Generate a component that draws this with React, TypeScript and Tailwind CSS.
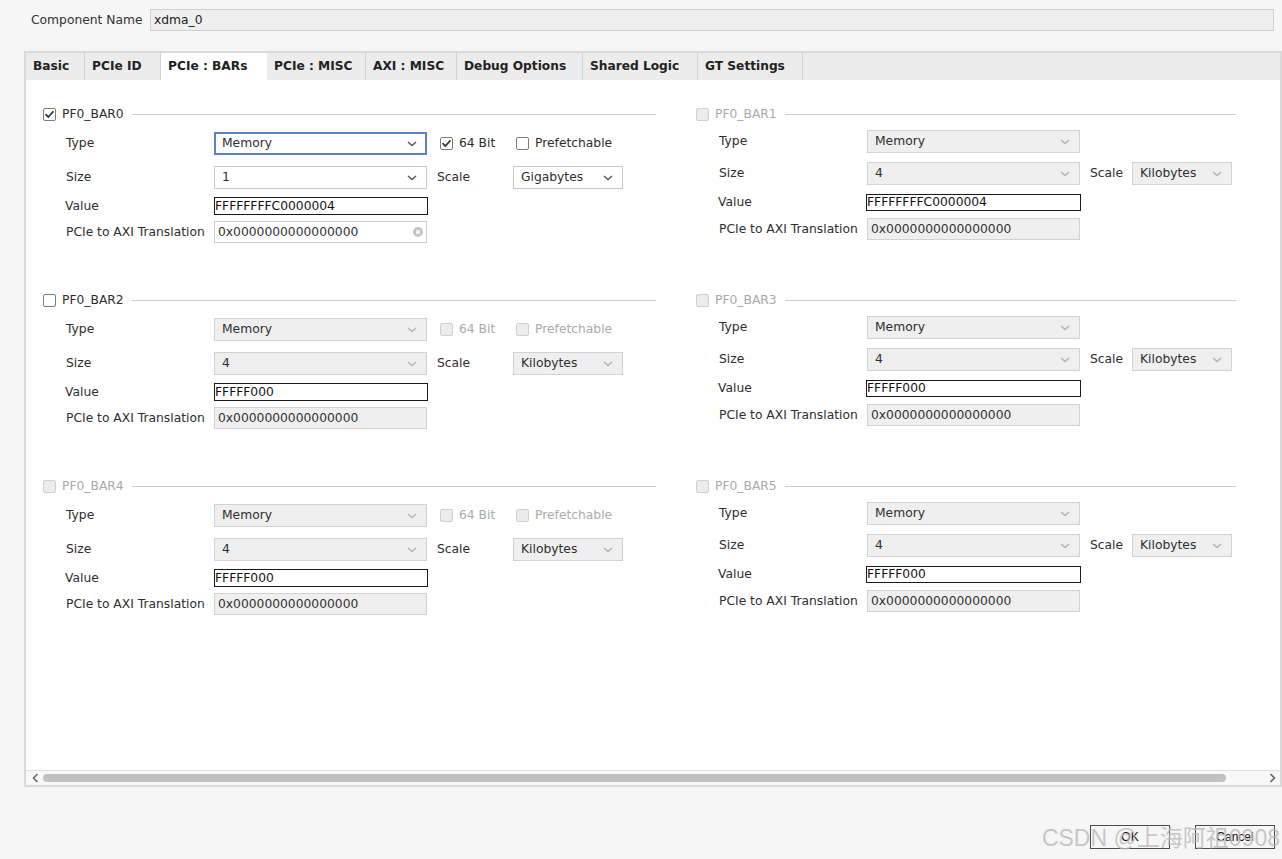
import React from 'react';

const FONT = "font-['DejaVu_Sans',sans-serif]";

// small square checkbox used in the group headers and option rows
const Check = ({ checked, disabled }: { checked?: boolean; disabled?: boolean }) => (
  <span
    className={`w-[13px] h-[13px] shrink-0 rounded-[2px] border flex items-center justify-center ${
      disabled ? 'border-[#d0d0d0] bg-[#ececec]' : 'border-[#7d7d7d] bg-white'
    }`}
  >
    {checked && (
      <svg width="11" height="11" viewBox="0 0 11 11">
        <path d="M2 5.6 L4.4 8 L9 2.8" fill="none" stroke="#3a3a3a" strokeWidth="1.8" strokeLinecap="round" strokeLinejoin="round" />
      </svg>
    )}
  </span>
);

const Chevron = ({ disabled }: { disabled?: boolean }) => (
  <svg width="10" height="6" viewBox="0 0 10 6">
    <path d="M1 1 L5 4.6 L9 1" fill="none" stroke={disabled ? '#b4b4b4' : '#5a5a5a'} strokeWidth="1.5" />
  </svg>
);

const Combo = ({
  value,
  disabled,
  focused,
  className,
}: {
  value: string;
  disabled?: boolean;
  focused?: boolean;
  className: string;
}) => {
  let look = 'border border-[#c9c9c9] bg-white pl-[7px] pr-[9px]';
  if (disabled) look = 'border border-[#d2d2d2] bg-[#efefef] pl-[7px] pr-[9px]';
  if (focused) look = 'border-2 border-[#5a82c9] bg-white pl-[6px] pr-[8px]';
  return (
    <div className={`h-[23px] flex items-center justify-between text-[#2e2e2e] ${look} ${className}`}>
      <span>{value}</span>
      <Chevron disabled={disabled} />
    </div>
  );
};

type Bar = {
  name: string;
  checked?: boolean;
  headerDisabled?: boolean;
  enabled?: boolean;
  side: 'left' | 'right';
  size: string;
  scale: string;
  value: string;
};

const Label = ({ children }: { children: React.ReactNode }) => (
  <div className="w-[171px] shrink-0 pl-[23px] text-[#2e2e2e]">{children}</div>
);

const BarGroup = ({ bar }: { bar: Bar }) => {
  const left = bar.side === 'left';
  const dis = !bar.enabled;
  return (
    <div className="h-[186px]">
      {/* header */}
      <div className="h-[16px] flex items-center">
        <Check checked={bar.checked} disabled={bar.headerDisabled} />
        <span className={`ml-[6px] ${bar.headerDisabled ? 'text-[#a9a9a9]' : 'text-[#2e2e2e]'}`}>{bar.name}</span>
        <div className="flex-1 h-px bg-[#cdcdcd] ml-[8px]" />
      </div>

      {/* Type */}
      <div className={`flex items-center ${left ? 'mt-[10px]' : 'mt-[8px]'}`}>
        <Label>Type</Label>
        <Combo value="Memory" disabled={dis} focused={bar.enabled} className="w-[213px]" />
        {left && (
          <div className="flex items-center ml-[13px]">
            <div className="w-[76px] flex items-center">
              <Check checked={bar.enabled} disabled={dis} />
              <span className={`ml-[6px] ${dis ? 'text-[#ababab]' : 'text-[#2e2e2e]'}`}>64 Bit</span>
            </div>
            <Check disabled={dis} />
            <span className={`ml-[6px] ${dis ? 'text-[#ababab]' : 'text-[#2e2e2e]'}`}>Prefetchable</span>
          </div>
        )}
      </div>

      {/* Size */}
      <div className={`flex items-center ${left ? 'mt-[11px]' : 'mt-[9px]'}`}>
        <Label>Size</Label>
        <Combo value={bar.size} disabled={dis} className="w-[213px]" />
        <span className={`ml-[10px] text-[#2e2e2e] ${left ? 'w-[76px]' : 'w-[42px]'}`}>Scale</span>
        <Combo value={bar.scale} disabled={dis} className={left ? 'w-[110px]' : 'w-[100px]'} />
      </div>

      {/* Value */}
      <div className="flex items-center mt-[8px]">
        <div className="w-[171px] shrink-0 pl-[22px] text-[#2e2e2e]">Value</div>
        <div
          className={`border border-[#1a1a1a] bg-white flex items-center text-[#111] leading-none ${
            left ? 'w-[214px] h-[18px]' : 'w-[215px] h-[17px] -ml-px'
          }`}
        >
          {bar.value}
        </div>
      </div>

      {/* PCIe to AXI */}
      <div className={`flex items-center ${left ? 'mt-[6px]' : 'mt-[7px]'}`}>
        <div className="w-[171px] shrink-0 pl-[23px] text-[#2e2e2e] whitespace-nowrap">PCIe to AXI Translation</div>
        <div
          className={`w-[213px] h-[22px] border flex items-center justify-between pl-[3px] pr-[3px] text-[#2e2e2e] ${
            bar.enabled ? 'border-[#cfcfcf] bg-white' : 'border-[#d2d2d2] bg-[#efefef]'
          }`}
        >
          <span>0x0000000000000000</span>
          {bar.enabled && (
            <svg width="10" height="10" viewBox="0 0 10 10">
              <circle cx="5" cy="5" r="5" fill="#c4c4c4" />
              <path d="M3.2 3.2 L6.8 6.8 M6.8 3.2 L3.2 6.8" stroke="#fff" strokeWidth="1.3" />
            </svg>
          )}
        </div>
      </div>
    </div>
  );
};

const tabs = [
  { label: 'Basic', w: 'w-[59px]' },
  { label: 'PCIe ID', w: 'w-[76px]' },
  { label: 'PCIe : BARs', w: 'w-[106px]', active: true },
  { label: 'PCIe : MISC', w: 'w-[99px]' },
  { label: 'AXI : MISC', w: 'w-[91px]' },
  { label: 'Debug Options', w: 'w-[126px]' },
  { label: 'Shared Logic', w: 'w-[115px]' },
  { label: 'GT Settings', w: 'w-[105px]' },
];

const leftBars: Bar[] = [
  { name: 'PF0_BAR0', checked: true, enabled: true, side: 'left', size: '1', scale: 'Gigabytes', value: 'FFFFFFFFC0000004' },
  { name: 'PF0_BAR2', side: 'left', size: '4', scale: 'Kilobytes', value: 'FFFFF000' },
  { name: 'PF0_BAR4', headerDisabled: true, side: 'left', size: '4', scale: 'Kilobytes', value: 'FFFFF000' },
];

const rightBars: Bar[] = [
  { name: 'PF0_BAR1', headerDisabled: true, side: 'right', size: '4', scale: 'Kilobytes', value: 'FFFFFFFFC0000004' },
  { name: 'PF0_BAR3', headerDisabled: true, side: 'right', size: '4', scale: 'Kilobytes', value: 'FFFFF000' },
  { name: 'PF0_BAR5', headerDisabled: true, side: 'right', size: '4', scale: 'Kilobytes', value: 'FFFFF000' },
];

export default function App() {
  return (
    <div className={`relative w-[1282px] h-[859px] bg-[#f6f6f6] text-[12.3px] overflow-hidden ${FONT}`}>
      {/* Component name */}
      <div className="flex items-center pt-[9px] pl-[31px] pr-[8px]">
        <span className="w-[119px] text-[#333]">Component Name</span>
        <div className="flex-1 h-[22px] border border-[#cfcfcf] bg-[#efefef] flex items-center pl-[3px] text-[#222]">
          xdma_0
        </div>
      </div>

      {/* Tabbed panel */}
      <div className="ml-[24px] mt-[20px] w-[1258px] h-[736px] border-2 border-[#dadada] flex flex-col">
        <div className="h-[27px] bg-[#ececec] flex">
          {tabs.map((t) => (
            <div
              key={t.label}
              className={`${t.w} h-full flex items-center pl-[7px] font-bold text-[12.2px] text-[#222] ${
                t.active ? 'bg-white' : 'border-r border-[#d2d2d2]'
              }`}
            >
              {t.label}
            </div>
          ))}
        </div>

        <div className="flex-1 bg-white flex pl-[17px] pt-[26px]">
          <div className="w-[613px] flex flex-col">
            {leftBars.map((b) => (
              <BarGroup key={b.name} bar={b} />
            ))}
          </div>
          <div className="w-[540px] ml-[40px] flex flex-col">
            {rightBars.map((b) => (
              <BarGroup key={b.name} bar={b} />
            ))}
          </div>
        </div>

        {/* horizontal scrollbar */}
        <div className="h-[15px] bg-[#f8f8f8] border-t border-[#e2e2e2] flex items-center">
          <svg className="ml-[6px]" width="7" height="10" viewBox="0 0 7 10">
            <path d="M5.5 1 L1.5 5 L5.5 9" fill="none" stroke="#666" strokeWidth="1.6" />
          </svg>
          <div className="ml-[4px] w-[1183px] h-[8px] rounded-full bg-[#c1c1c1]" />
          <div className="flex-1" />
          <svg className="mr-[4px]" width="7" height="10" viewBox="0 0 7 10">
            <path d="M1.5 1 L5.5 5 L1.5 9" fill="none" stroke="#666" strokeWidth="1.6" />
          </svg>
        </div>
      </div>

      {/* dialog buttons */}
      <div className="flex justify-end gap-[25px] pr-[7px] mt-[38px]">
        <div className="w-[80px] h-[24px] border border-[#4a4a4a] flex items-center justify-center text-[12px] text-[#111] font-['Liberation_Sans',sans-serif]">
          OK
        </div>
        <div className="w-[80px] h-[24px] border border-[#4a4a4a] flex items-center justify-center text-[12px] text-[#111] font-['Liberation_Sans',sans-serif]">
          Cancel
        </div>
      </div>

      {/* watermark */}
      <div className="absolute right-[2px] bottom-[9px] text-[23px] leading-none text-[#b9b9b9]/80 font-['Liberation_Sans','Noto_Sans_CJK_SC',sans-serif] pointer-events-none">
        CSDN @上海阿祖0908
      </div>
    </div>
  );
}
